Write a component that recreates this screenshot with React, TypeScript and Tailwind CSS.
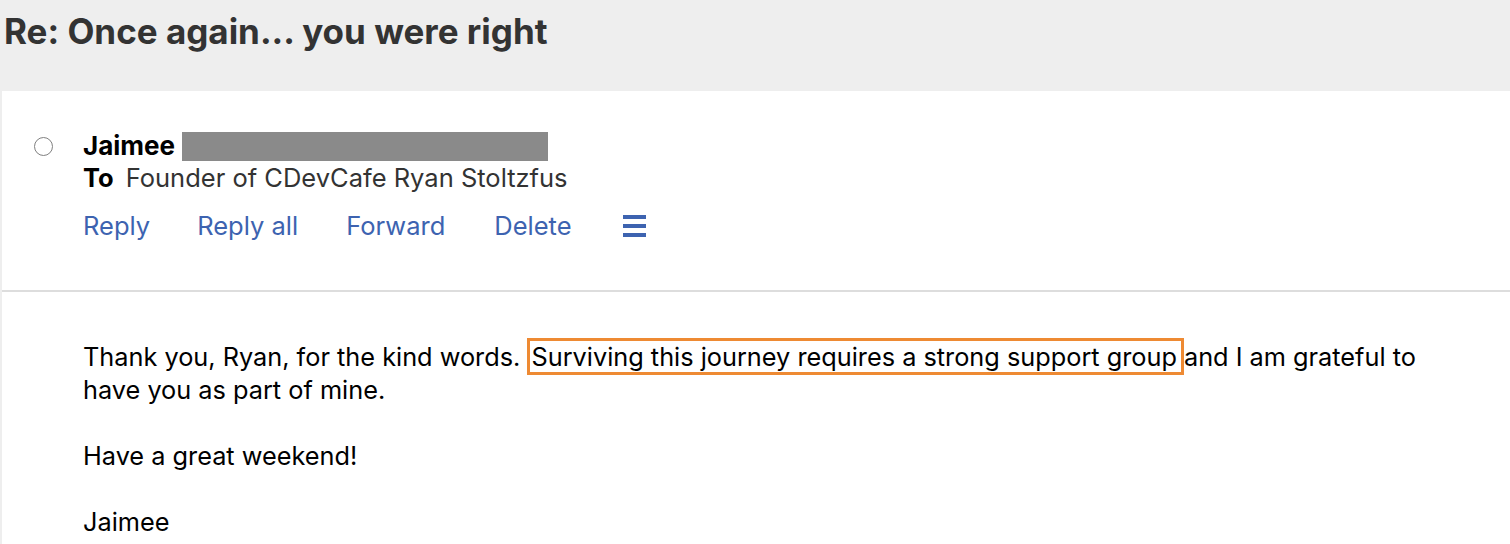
import React from "react";

export default function App() {
  return (
    <div className="w-[1510px] h-[544px] overflow-hidden bg-[#eeeeee] font-['Inter',sans-serif]">
      <div className="h-[91px] pl-[4px] pt-[9px]">
        <h1 className="text-[35px] leading-[44px] font-bold text-[#333333]">
          Re: Once again... you were right
        </h1>
      </div>
      <div className="ml-[2px] bg-white h-[453px]">
        <div className="pt-[40px] h-[201px] border-b-2 border-[#dddddd]">
          <div className="flex">
            <div className="w-[81px] flex justify-end pr-[30px] pt-[6px]">
              <div className="w-[19px] h-[19px] rounded-full border-[1.5px] border-[#808080]" />
            </div>
            <div className="flex flex-col">
              <div className="flex items-center h-[30px]">
                <span className="text-[26px] font-bold text-black leading-[30px]">Jaimee</span>
                <span className="ml-[7px] w-[366px] h-[29px] bg-[#8a8a8a]" />
              </div>
              <div className="flex items-center h-[34px]">
                <span className="text-[25.5px] font-bold text-black">To</span>
                <span className="ml-[12px] text-[25.5px] text-[#333333]">Founder of CDevCafe Ryan Stoltzfus</span>
              </div>
              <div className="flex items-center h-[34px] mt-[14px] text-[25.5px] text-[#3d63b0]">
                <span>Reply</span>
                <span className="ml-[47px]">Reply all</span>
                <span className="ml-[48px]">Forward</span>
                <span className="ml-[49px]">Delete</span>
                <span className="ml-[51px] flex flex-col gap-[5px]">
                  <span className="block w-[23px] h-[4px] bg-[#3d63b0]" />
                  <span className="block w-[23px] h-[4px] bg-[#3d63b0]" />
                  <span className="block w-[23px] h-[4px] bg-[#3d63b0]" />
                </span>
              </div>
            </div>
          </div>
        </div>
        <div className="pl-[81px] pt-[48px] pr-[63px] text-[25.3px] leading-[33px] text-black">
          <p>
            Thank you, Ryan, for the kind words.{" "}
            <span className="border-[3px] border-[#ee8a33] pl-[1px] pr-[4px]">Surviving this journey requires a strong support group</span>
            and I am grateful to have you as part of mine.
          </p>
          <p className="mt-[33px]">Have a great weekend!</p>
          <p className="mt-[33px]">Jaimee</p>
        </div>
      </div>
    </div>
  );
}
